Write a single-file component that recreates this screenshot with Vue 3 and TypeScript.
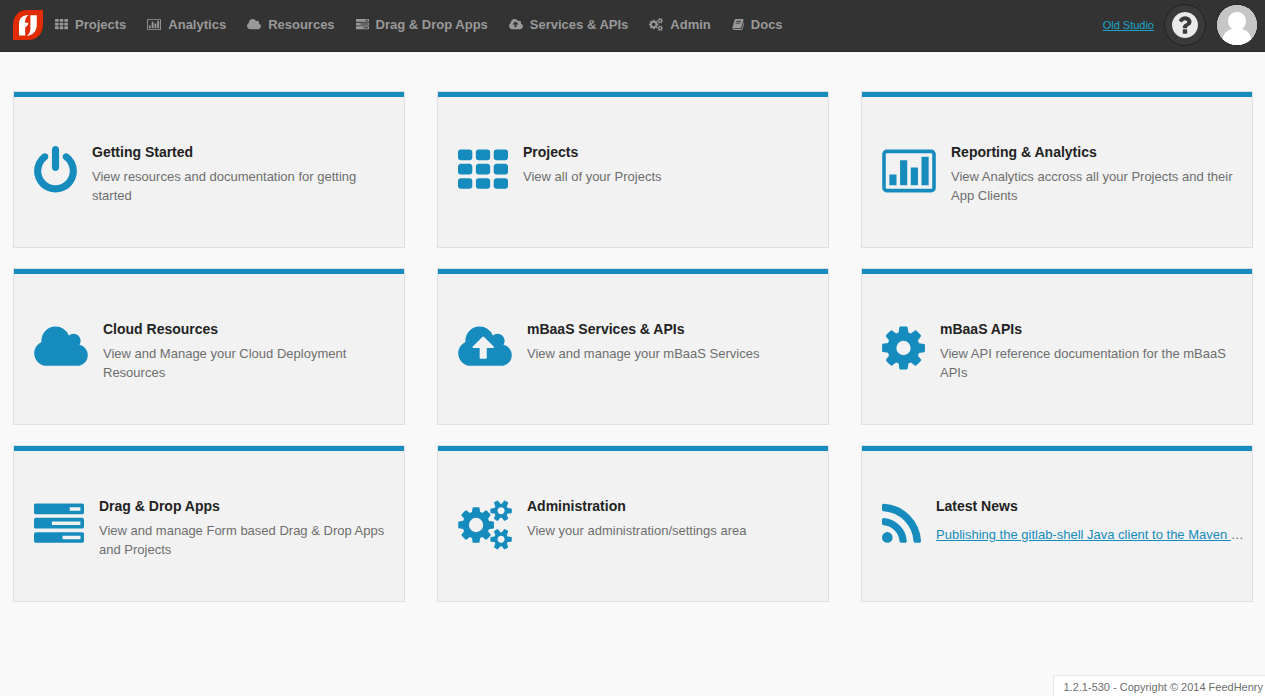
<script setup lang="ts">
interface Icon {
  width: number
  offset: number
  path: string
}

interface NavItem {
  label: string
  icon: string
}

interface Card {
  title: string
  icon: string
  text?: string
  link?: string
}

const cloud =
  'M1984 1152q0 159-112.5 271.5t-271.5 112.5h-1088q-185 0-316.5-131.5t-131.5-316.5q0-132 71-241.5t187-163.5q-2-28-2-43 0-212 150-362t362-150q158 0 286.5 88t187.5 230q70-62 166-62 106 0 181 75t75 181q0 75-41 138 129 30 213 134.5t84 239.5z'

const smallGear =
  'q0 16-149 31-12 27-30 52 51 113 51 138 0 4-4 7-122 71-124 71-8 0-46-47t-52-68q-20 2-30 2t-30-2q-14 21-52 68t-46 47q-2 0-124-71-4-3-4-7 0-25 51-138-18-25-30-52-149-15-149-31v-140q0-16 149-31 13-29 30-52-51-113-51-138 0-4 4-7 4-2 35-20t59-34 30-16q8 0 46 46.5t52 67.5q20-2 30-2t30 2q51-71 92-112l6-2q4 0 124 70 4 3 4 7 0 25-51 138 17 23 30 52 149 15 149 31z'

const cell = (x: number, y: number): string =>
  `M${x + 96} ${y}h320q40 0 68 28t28 68v192q0 40-28 68t-68 28h-320q-40 0-68-28t-28-68v-192q0-40 28-68t68-28z`

const slat = (y: number, slot: number): string =>
  `M64 ${y}h1664q26 0 45 19t19 45v256q0 26-19 45t-45 19h-1664q-26 0-45-19t-19-45v-256q0-26 19-45t45-19zM${slot} ${y + 128}v128H1664v-128z`

const icons: Record<string, Icon> = {
  power: {
    width: 1536,
    offset: 128,
    path: 'M1664 896q0 156-61 298t-164 245-245 164-298 61-298-61-245-164-164-245-61-298q0-182 80.5-343t226.5-270q43-32 95.5-25t83.5 50q32 42 24.5 94.5t-49.5 84.5q-98 74-151.5 181t-53.5 228q0 104 40.5 198.5t109.5 163.5 163.5 109.5 198.5 40.5 198.5-40.5 163.5-109.5 109.5-163.5 40.5-198.5q0-121-53.5-228t-151.5-181q-42-32-49.5-84.5t24.5-94.5q31-43 84-50t95 25q146 109 226.5 270t80.5 343zm-640-768v640q0 52-38 90t-90 38-90-38-38-90v-640q0-52 38-90t90-38 90 38 38 90z',
  },
  grid: {
    width: 1792,
    offset: 0,
    path: [128, 640, 1152].map((y) => [0, 640, 1280].map((x) => cell(x, y)).join('')).join(''),
  },
  chart: {
    width: 1920,
    offset: 0,
    path: 'M160 128h1600q66 0 113 47t47 113v1216q0 66-47 113t-113 47H160q-66 0-113-47t-47-113V288q0-66 47-113t113-47zM160 256q-13 0-22.5 9.5T128 288v1216q0 13 9.5 22.5T160 1536h1600q13 0 22.5-9.5t9.5-22.5V288q0-13-9.5-22.5T1760 256zM256 1024h256v384H256zM640 512h256v896H640zM1024 768h256v640h-256zM1408 384h256v1024h-256z',
  },
  cloud: { width: 1920, offset: 64, path: cloud },
  upload: {
    width: 1920,
    offset: 64,
    path: `M1344 864q0-14-9-23l-352-352q-9-9-23-9t-23 9l-351 351q-10 12-10 24 0 14 9 23t23 9h224v352q0 13 9.5 22.5t22.5 9.5h192q13 0 22.5-9.5t9.5-22.5v-352h224q13 0 22.5-9.5t9.5-22.5z${cloud}`,
  },
  gear: {
    width: 1536,
    offset: 128,
    path: 'M1152 896q0-106-75-181t-181-75-181 75-75 181 75 181 181 75 181-75 75-181zm512-109v222q0 12-8 23t-20 13l-185 28q-19 54-39 91 35 50 107 138 10 12 10 25t-9 23q-27 37-99 108t-94 71q-12 0-26-9l-138-108q-44 23-91 38-16 136-29 186-7 28-36 28h-222q-14 0-24.5-8.5t-11.5-21.5l-28-184q-49-16-90-37l-141 107q-10 9-25 9-14 0-25-11-126-114-165-168-7-10-7-23 0-12 8-23 15-21 51-66.5t54-70.5q-27-50-41-99l-183-27q-13-2-21-12.5t-8-23.5v-222q0-12 8-23t19-13l186-28q14-46 39-92-40-57-107-138-10-12-10-24 0-10 9-23 26-36 98.5-107.5t94.5-71.5q13 0 26 10l138 107q44-23 91-38 16-136 29-186 7-28 36-28h222q14 0 24.5 8.5t11.5 21.5l28 184q49 16 90 37l142-107q9-9 24-9 13 0 25 10 129 119 165 170 7 8 7 22 0 12-8 23-15 21-51 66.5t-54 70.5q26 50 41 98l183 28q13 2 21 12.5t8 23.5z',
  },
  slats: {
    width: 1792,
    offset: 0,
    path: slat(128, 1280) + slat(640, 640) + slat(1152, 1024),
  },
  gears: {
    width: 1920,
    offset: 0,
    path: `M896 896q0-106-75-181t-181-75-181 75-75 181 75 181 181 75 181-75 75-181zm768 512q0-52-38-90t-90-38-90 38-38 90q0 53 37.5 90.5t90.5 37.5 90.5-37.5 37.5-90.5zm0-1024q0-52-38-90t-90-38-90 38-38 90q0 53 37.5 90.5t90.5 37.5 90.5-37.5 37.5-90.5zm-384 421v185q0 10-7 19.5t-16 10.5l-155 24q-11 35-32 76 34 48 90 115 7 11 7 20 0 12-7 19-23 30-82.5 89.5t-78.5 59.5q-11 0-21-7l-115-90q-37 19-77 31-11 108-23 155-7 24-30 24h-186q-11 0-20-7.5t-10-17.5l-23-153q-34-10-75-31l-118 89q-7 7-20 7-11 0-21-8-144-133-144-160 0-9 7-19 10-14 41-53t47-61q-23-44-35-82l-152-24q-10-1-17-9.5t-7-19.5v-185q0-10 7-19.5t16-10.5l155-24q11-35 32-76-34-48-90-115-7-11-7-20 0-12 7-20 22-30 82-89t79-59q11 0 21 7l115 90q34-18 77-32 11-108 23-154 7-24 30-24h186q11 0 20 7.5t10 17.5l23 153q34 10 75 31l118-89q8-7 20-7 11 0 21 8 144 133 144 160 0 8-7 19-12 16-42 54t-45 60q23 48 34 82l152 23q10 2 17 10.5t7 19.5zM1920 1338v140${smallGear}M1920 314v140${smallGear}`,
  },
  feed: {
    width: 1408,
    offset: 192,
    path: 'M576 1344q0 80-56 136t-136 56-136-56-56-136 56-136 136-56 136 56 56 136zm512 123q2 28-17 48-18 21-47 21h-135q-25 0-43-16.5t-20-41.5q-22-229-184.5-391.5t-391.5-184.5q-25-2-41.5-20t-16.5-43v-135q0-29 21-47 17-17 43-17h5q160 13 306 80.5t259 181.5q114 113 181.5 259t80.5 306zm512 2q2 27-18 47-18 20-46 20h-143q-26 0-44.5-17.5t-19.5-42.5q-12-215-101-408.5t-231.5-336-336-231.5-408.5-102q-25-1-42.5-19.5t-17.5-43.5v-143q0-28 20-46 18-18 44-18h3q262 13 501.5 120t425.5 294q187 186 294 425.5t120 501.5z',
  },
  book: {
    width: 1664,
    offset: 64,
    path: 'M620 128h900q74 0 114 56t18 130l-274 906q-36 119-71.5 153.5t-128.5 34.5H309q-27 0-38 15-11 16-1 43 24 70 144 70h923q29 0 56-15.5t35-41.5l300-987q7-22 5-57 38 15 59 43 40 57 18 129l-275 906q-19 64-76.5 107.5t-122.500 43.500H414q-97 0-178-63t-110-152q-24-67 6-140L430 270q40-120 190-142zM639 480q-4 13 2 22.5t20 9.5h608q13 0 25.5-9.5t16.5-22.5l21-64q4-13-2-22.5t-20-9.5h-608q-13 0-25.5 9.5t-16.5 22.5zM556 736q-4 13 2 22.5t20 9.5h608q13 0 25.5-9.5t16.5-22.5l21-64q4-13-2-22.5t-20-9.5h-608q-13 0-25.5 9.5t-16.5 22.5z',
  },
}

const viewBox = (name: string): string => `${icons[name].offset} 0 ${icons[name].width} 1792`
const iconWidth = (name: string, size: number): string =>
  `${Math.round((icons[name].width * size) / 1792)}px`

const nav: NavItem[] = [
  { label: 'Projects', icon: 'grid' },
  { label: 'Analytics', icon: 'chart' },
  { label: 'Resources', icon: 'cloud' },
  { label: 'Drag & Drop Apps', icon: 'slats' },
  { label: 'Services & APIs', icon: 'upload' },
  { label: 'Admin', icon: 'gears' },
  { label: 'Docs', icon: 'book' },
]

const cards: Card[] = [
  { title: 'Getting Started', icon: 'power', text: 'View resources and documentation for getting started' },
  { title: 'Projects', icon: 'grid', text: 'View all of your Projects' },
  { title: 'Reporting & Analytics', icon: 'chart', text: 'View Analytics accross all your Projects and their App Clients' },
  { title: 'Cloud Resources', icon: 'cloud', text: 'View and Manage your Cloud Deployment Resources' },
  { title: 'mBaaS Services & APIs', icon: 'upload', text: 'View and manage your mBaaS Services' },
  { title: 'mBaaS APIs', icon: 'gear', text: 'View API reference documentation for the mBaaS APIs' },
  { title: 'Drag & Drop Apps', icon: 'slats', text: 'View and manage Form based Drag & Drop Apps and Projects' },
  { title: 'Administration', icon: 'gears', text: 'View your administration/settings area' },
  { title: 'Latest News', icon: 'feed', link: 'Publishing the gitlab-shell Java client to the Maven Central Repository' },
]
</script>

<template>
  <div class="page">
    <header class="topbar">
      <a href="#" class="logo" aria-label="FeedHenry home">
        <svg viewBox="0 0 30 30" aria-hidden="true">
          <path fill="#e12b00" d="M14 0H30V14C30 24 24 30 15 30H0V15C0 6 6 0 14 0Z" />
          <path
            fill="#fff"
            d="M6 25.5V14C6 8.5 9 5.200 15.500 5C13 7 12 9.500 12 12.800H15.500C15.200 15 14 16.500 12.200 17V25.500ZM17.400 5.200H23.800V14C23.800 21 20.500 25.300 13.500 25.800C16.400 24 17.400 22 17.400 18.500Z"
          />
        </svg>
      </a>
      <nav class="nav">
        <a v-for="item in nav" :key="item.label" href="#" class="nav-item">
          <svg
            class="nav-icon"
            :viewBox="viewBox(item.icon)"
            :style="{ width: iconWidth(item.icon, 13) }"
            aria-hidden="true"
          >
            <path :d="icons[item.icon].path" fill-rule="evenodd" />
          </svg>
          <span>{{ item.label }}</span>
        </a>
      </nav>
      <div class="account">
        <a href="#" class="old-studio">Old Studio</a>
        <button type="button" class="round help" aria-label="Help">
          <svg viewBox="128 128 1536 1536" aria-hidden="true">
            <path
              fill="#e9eaeb"
              d="M1024 1376v-192q0-14-9-23t-23-9h-192q-14 0-23 9t-9 23v192q0 14 9 23t23 9h192q14 0 23-9t9-23zm256-672q0-88-55.5-163t-138.5-116-170-41q-243 0-371 213-15 24 8 42l132 100q7 6 19 6 16 0 25-12 53-68 86-92 34-24 86-24 48 0 85.5 26t37.5 59q0 38-20 61t-68 45q-63 28-115.5 86.5t-52.5 125.5v36q0 14 9 23t23 9h192q14 0 23-9t9-23q0-19 21.5-49.5t54.5-49.5q32-18 49-28.5t46-35 44.5-48 28-60.5 12.5-81zm384 192q0 209-103 385.5t-279.5 279.5-385.5 103-385.5-103-279.5-279.5-103-385.5 103-385.5 279.5-279.5 385.5-103 385.5 103 279.5 279.5 103 385.5z"
            />
          </svg>
        </button>
        <button type="button" class="round avatar" aria-label="Account">
          <svg viewBox="0 0 40 40" aria-hidden="true">
            <rect width="40" height="40" fill="#c6c6c6" />
            <path
              fill="#fff"
              d="M20 7C25.5 7 29 11 29 16C29 19.5 27.5 22 25 24C31 25.5 34.5 30 34.5 36V40H5.5V36C5.5 30 9 25.5 15 24C12.5 22 11 19.5 11 16C11 11 14.5 7 20 7Z"
            />
          </svg>
        </button>
      </div>
    </header>

    <main class="cards">
      <section v-for="card in cards" :key="card.title" class="card">
        <svg
          class="card-icon"
          :viewBox="viewBox(card.icon)"
          :style="{ width: iconWidth(card.icon, 50) }"
          aria-hidden="true"
        >
          <path :d="icons[card.icon].path" fill-rule="evenodd" />
        </svg>
        <div class="card-body">
          <h2>{{ card.title }}</h2>
          <p v-if="card.text">{{ card.text }}</p>
          <p v-else class="news"><a href="#">{{ card.link }}</a></p>
        </div>
      </section>
    </main>

    <footer class="footer">1.2.1-530 - Copyright © 2014 FeedHenry</footer>
  </div>
</template>

<style>
body {
  margin: 0;
  background: #f9f9f9;
}
</style>

<style scoped>
.page {
  min-height: 100vh;
  font-family: "Liberation Sans", Arial, sans-serif;
  font-size: 13px;
  line-height: 19px;
  color: #6e6e6e;
}

.topbar {
  display: flex;
  align-items: center;
  box-sizing: border-box;
  height: 52px;
  padding: 0 7px 2px 13px;
  background: #333;
  border-bottom: 1px solid #2b2b2b;
}

.logo,
.logo svg {
  display: block;
  width: 30px;
  height: 30px;
}

.nav {
  display: flex;
  gap: 21px;
  margin-left: 12px;
}

.nav-item {
  display: flex;
  align-items: center;
  gap: 7px;
  font-weight: bold;
  color: #999;
  text-decoration: none;
  white-space: nowrap;
}

.nav-icon {
  height: 13px;
  fill: #999;
}

.account {
  display: flex;
  align-items: center;
  gap: 10px;
  margin-left: auto;
}

.old-studio {
  padding-top: 2px;
  font-size: 11px;
  color: #1ba7cc;
}

.round {
  display: flex;
  align-items: center;
  justify-content: center;
  box-sizing: border-box;
  width: 42px;
  height: 42px;
  padding: 0;
  border: 1px solid #222;
  border-radius: 50%;
  overflow: hidden;
}

.help {
  background: #3a3a3a;
}

.help svg {
  width: 26px;
  height: 26px;
}

.avatar svg {
  flex: none;
  width: 40px;
  height: 40px;
}

.cards {
  display: grid;
  grid-template-columns: repeat(3, minmax(0, 1fr));
  gap: 20px 32px;
  padding: 39px 12px 40px 13px;
}

.card {
  display: flex;
  align-items: flex-start;
  gap: 15px;
  box-sizing: border-box;
  min-height: 157px;
  padding: 54px 5px 40px 20px;
  border: 1px solid #dde1e4;
  background: linear-gradient(#168bbd, #168bbd) top / 100% 5px no-repeat #f2f2f2;
}

.card-icon {
  flex: none;
  height: 50px;
  fill: #168bbd;
}

.card-body {
  min-width: 0;
}

h2 {
  margin: 0;
  padding-bottom: 9px;
  font-size: 14px;
  line-height: 12px;
  color: #222;
}

p {
  margin: 0;
}

.news {
  padding-top: 4px;
  overflow: hidden;
  white-space: nowrap;
  text-overflow: ellipsis;
}

.news a {
  color: #168bbd;
}

.footer {
  position: fixed;
  right: 0;
  bottom: 0;
  padding: 3px 2px 0 10px;
  border: 1px solid #e8e8e8;
  border-width: 1px 0 0 1px;
  background: #fff;
  font-size: 11px;
  line-height: 17px;
}
</style>
